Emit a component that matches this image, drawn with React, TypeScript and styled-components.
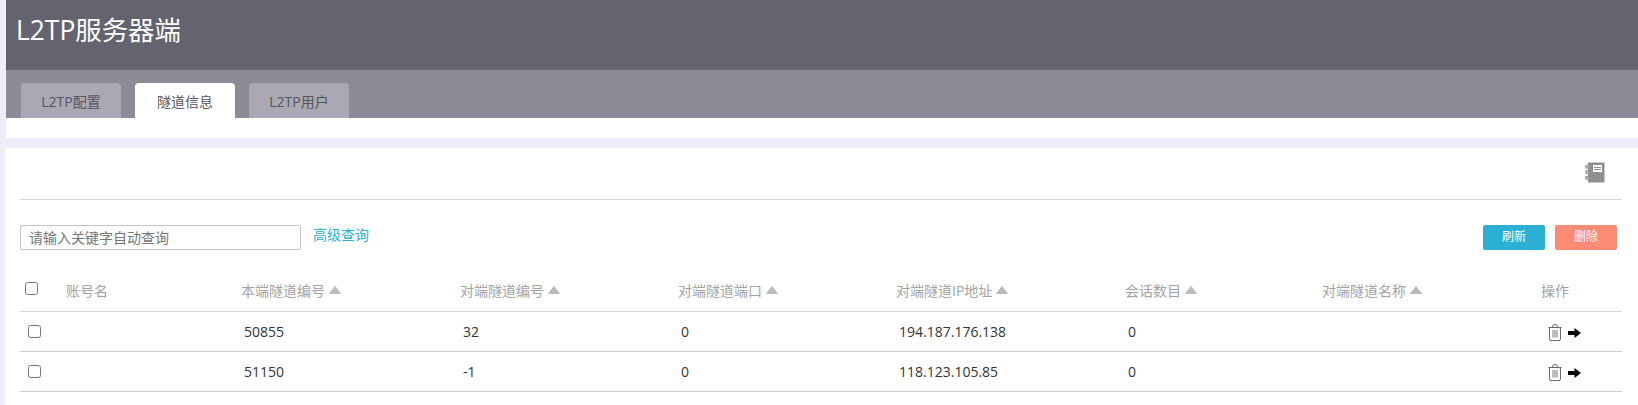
import React from "react";
import styled, { createGlobalStyle } from "styled-components";

const Global = createGlobalStyle`
  html, body { margin: 0; padding: 0; background: #eeeef8; overflow: hidden; }
  body { font-family: "Open Sans", "Noto Sans CJK SC", sans-serif; }
  * { box-sizing: border-box; }
`;

const Page = styled.div`
  width: 1638px;
  height: 405px;
  display: flex;
  flex-direction: column;
  overflow: hidden;
`;
const TopPanel = styled.section`
  margin-left: 6px;
  height: 138px;
  background: #fff;
`;
const Header = styled.header`
  height: 70px;
  background: #636470;
  padding: 10px 0 0 10px;
  color: #fff;
  font-size: 26.4px;
  line-height: 40px;
`;
const TabBar = styled.nav`
  height: 48px;
  background: #8d8b95;
  padding: 13px 0 0 15px;
  display: flex;
  gap: 14px;
`;
const Tab = styled.div<{ $active?: boolean }>`
  width: 100px;
  height: 35px;
  border-radius: 4px 4px 0 0;
  background: ${(p) => (p.$active ? "#fff" : "#aaa8b3")};
  color: #55555f;
  font-size: 14px;
  line-height: 37px;
  text-align: center;
`;
const Card = styled.section`
  margin: 10px 0 0 5px;
  flex: 1;
  background: #fff;
  padding: 0 16px 0 15px;
`;
const IconBar = styled.div`
  height: 52px;
  border-bottom: 1px solid #d8d8d8;
  display: flex;
  justify-content: flex-end;
  padding: 14px 17px 0 0;
`;
const Toolbar = styled.div`
  height: 62px;
  display: flex;
  align-items: flex-start;
  padding-top: 25px;
`;
const Search = styled.input`
  width: 281px;
  height: 25px;
  border: 1px solid #c4c4c4;
  border-radius: 2px;
  padding: 0 8px 1px;
  font: 14px "Open Sans", "Noto Sans CJK SC", sans-serif;
  color: #757575;
  outline: none;
  &::placeholder { color: #757575; opacity: 1; }
`;
const AdvLink = styled.a`
  margin-left: 12px;
  color: #2cb0d2;
  font-size: 14px;
  line-height: 19px;
`;
const Spacer = styled.div`
  flex: 1;
`;
const ActionButton = styled.button<{ $tone: string }>`
  width: 62px;
  height: 25px;
  margin-right: 5px;
  margin-left: 5px;
  border: 0;
  border-radius: 2px;
  background: ${(p) => p.$tone};
  color: #fff;
  font: 12px/23px "Open Sans", "Noto Sans CJK SC", sans-serif;
  padding: 0 0 2px;
`;
const Row = styled.div<{ $head?: boolean }>`
  display: grid;
  grid-template-columns: 46px 175px 219px 218px 218px 229px 197px 219px 1fr;
  align-items: center;
  height: ${(p) => (p.$head ? "50px" : "40px")};
  border-bottom: 1px solid ${(p) => (p.$head ? "#d8d8d8" : "#cfcfcf")};
`;
const HeadCell = styled.div`
  color: #a3a3a3;
  font-size: 14px;
  display: flex;
  align-items: center;
  gap: 4px;
  padding-top: 6px;
`;
const Cell = styled.div`
  color: #333;
  font-size: 14px;
  padding-left: 3px;
`;
const Check = styled.input.attrs({ type: "checkbox" })<{ $head?: boolean }>`
  appearance: none;
  width: 13px;
  height: 13px;
  margin: ${(p) => (p.$head ? "3px 0 0 5px" : "0 0 0 8px")};
  border: 1px solid #767676;
  border-radius: 2.5px;
  background: #fff;
`;
const Ops = styled.div`
  display: flex;
  align-items: center;
  gap: 6px;
  padding: 2px 0 0 7px;
`;

const Sort = () => (
  <svg width="12" height="8" viewBox="0 0 12 8">
    <path d="M6 0.5 L11.5 7.5 H0.5 Z" fill="#bbb" stroke="#bbb" strokeLinejoin="round" />
  </svg>
);
const Notebook = () => (
  <svg width="20" height="21" viewBox="0 0 20 21">
    <rect x="3" y="0.5" width="16.5" height="20" fill="#8f8f8f" />
    <rect x="8" y="3" width="9" height="7" fill="#fff" />
    <rect x="9" y="5" width="7" height="1" fill="#8f8f8f" />
    <rect x="9" y="7" width="7" height="1" fill="#8f8f8f" />
    <g fill="none" stroke="#999" strokeWidth="1.6">
      <path d="M4.5 3.5 H2 a1 1 0 0 0 0 2.5 H4" />
      <path d="M4.5 9 H2 a1 1 0 0 0 0 2.5 H4" />
      <path d="M4.5 14.5 H2 a1 1 0 0 0 0 2.5 H4" />
    </g>
  </svg>
);
const Trash = () => (
  <svg width="14" height="17" viewBox="0 0 14 17" fill="none" stroke="#444" strokeWidth="0.8">
    <path d="M0.5 3.5 H13.5 M1.5 3.5 V15 a1.5 1.5 0 0 0 1.5 1.5 H11 a1.5 1.5 0 0 0 1.5 -1.5 V3.5" />
    <path d="M4.5 3.5 V2.5 Q4.5 0.5 7 0.5 Q9.5 0.5 9.5 2.5 V3.5" />
    <path d="M5 6 V13.5 M7 6 V13.5 M9 6 V13.5" strokeWidth="0.7" />
  </svg>
);
const Arrow = () => (
  <svg width="13" height="10" viewBox="0 0 13 10">
    <path d="M0 3 H6.5 V0 L13 5 L6.5 10 V7 H0 Z" fill="#000" />
  </svg>
);

const heads: [string, boolean][] = [
  ["账号名", false],
  ["本端隧道编号", true],
  ["对端隧道编号", true],
  ["对端隧道端口", true],
  ["对端隧道IP地址", true],
  ["会话数目", true],
  ["对端隧道名称", true],
  ["操作", false],
];
const rows = [
  ["", "50855", "32", "0", "194.187.176.138", "0", ""],
  ["", "51150", "-1", "0", "118.123.105.85", "0", ""],
];

export default function App() {
  return (
    <Page>
      <Global />
      <TopPanel>
        <Header>L2TP服务器端</Header>
        <TabBar>
          <Tab>L2TP配置</Tab>
          <Tab $active>隧道信息</Tab>
          <Tab>L2TP用户</Tab>
        </TabBar>
      </TopPanel>
      <Card>
        <IconBar>
          <Notebook />
        </IconBar>
        <Toolbar>
          <Search placeholder="请输入关键字自动查询" />
          <AdvLink>高级查询</AdvLink>
          <Spacer />
          <ActionButton $tone="#29b0d3">刷新</ActionButton>
          <ActionButton $tone="#fc8b76">删除</ActionButton>
        </Toolbar>
        <Row $head>
          <Check $head />
          {heads.map(([label, sortable]) => (
            <HeadCell key={label}>
              {label}
              {sortable && <Sort />}
            </HeadCell>
          ))}
        </Row>
        {rows.map((r) => (
          <Row key={r[1]}>
            <Check />
            {r.map((v, i) => (
              <Cell key={i}>{v}</Cell>
            ))}
            <Ops>
              <Trash />
              <Arrow />
            </Ops>
          </Row>
        ))}
      </Card>
    </Page>
  );
}
